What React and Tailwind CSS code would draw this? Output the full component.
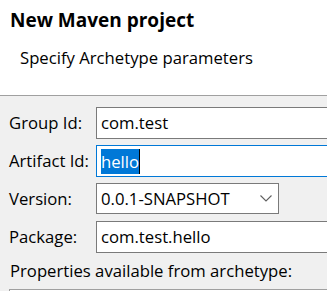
export default function App() {
  const font = { fontFamily: '"Open Sans", "Noto Sans", sans-serif' };
  return (
    <div className="w-[327px] h-[291px] overflow-hidden bg-[#f0f0f0] text-black" style={font}>
      <div className="h-[96px] bg-white border-b border-[#a0a0a0] pt-[8px] pl-[10px]">
        <div className="text-[19px] font-bold leading-[24px]">New Maven project</div>
        <div className="pl-[10px] mt-[15px] text-[16.7px] leading-[22px]">Specify Archetype parameters</div>
      </div>
      <div className="pl-[9px] pt-[11px] w-[500px] text-[16.7px]">
        <div className="grid grid-cols-[87px_1fr] gap-y-[6px]">
          <div className="flex items-center">Group Id:</div>
          <div className="h-[32px] bg-white border border-[#7a7a7a] flex items-center pl-[4px]">com.test</div>
          <div className="flex items-center">Artifact Id:</div>
          <div className="h-[32px] bg-white border border-[#0078d7] flex items-center pl-[4px]">
            <span className="bg-[#0078d7] text-white leading-[25px]">hello</span>
            <span className="w-[1px] h-[25px] bg-black" />
          </div>
          <div className="flex items-center">Version:</div>
          <div className="h-[31px] w-[183px] bg-white border border-[#7a7a7a] flex items-center justify-between pl-[4px] pr-[6px]">
            <span>0.0.1-SNAPSHOT</span>
            <svg width="12" height="7" viewBox="0 0 12 7" fill="none">
              <path d="M0.5 0.5 L6 6 L11.5 0.5" stroke="#606060" strokeWidth="1.1" />
            </svg>
          </div>
          <div className="flex items-center mt-[1px]">Package:</div>
          <div className="h-[32px] mt-[1px] bg-white border border-[#7a7a7a] flex items-center pl-[4px]">com.test.hello</div>
        </div>
        <div className="mt-[7px] leading-[22px] pl-[1px]">Properties available from archetype:</div>
        <div className="mt-[7px] h-[40px] bg-white border border-[#a0a0a0]" />
      </div>
    </div>
  );
}
